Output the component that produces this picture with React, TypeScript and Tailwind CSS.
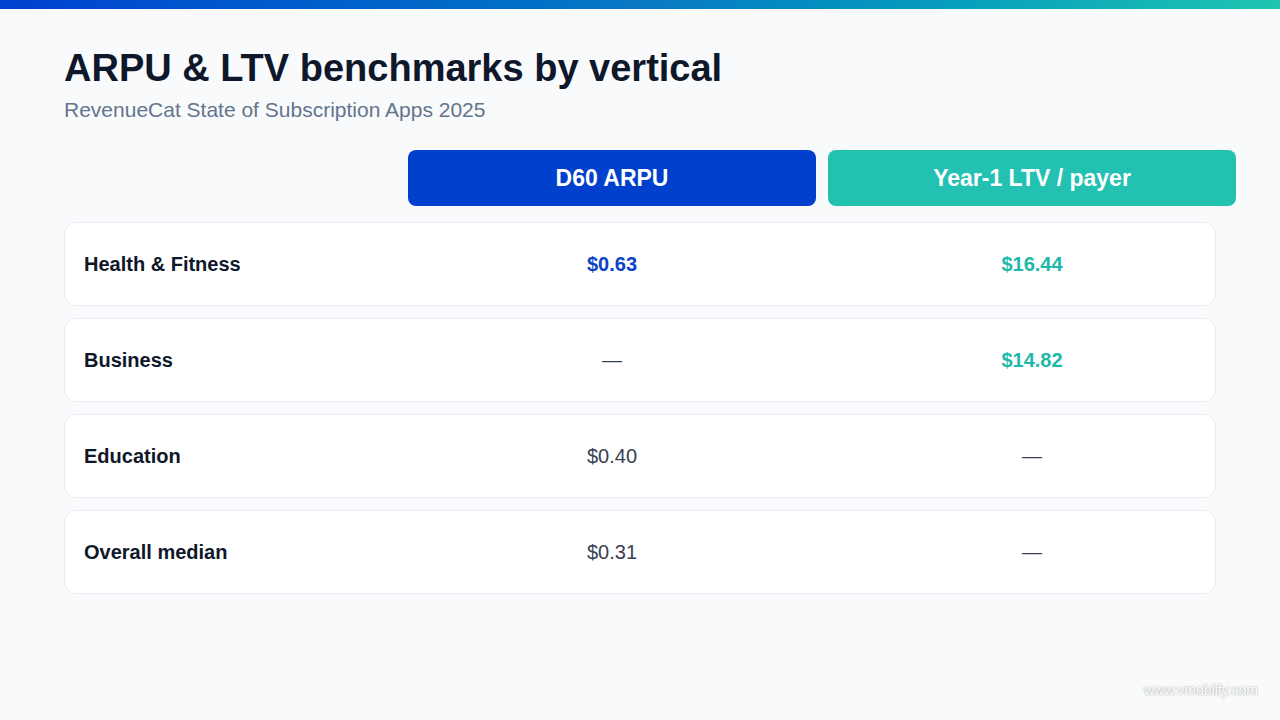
const rows = [
  { label: 'Health & Fitness', arpu: '$0.63', ltv: '$16.44' },
  { label: 'Business', arpu: null, ltv: '$14.82' },
  { label: 'Education', arpu: '$0.40', ltv: null },
  { label: 'Overall median', arpu: '$0.31', ltv: null },
];

export default function App() {
  return (
    <div
      className="w-[1280px] h-[720px] bg-[#f8fafc] relative overflow-hidden"
      style={{ fontFamily: '"Liberation Sans", Arial, sans-serif' }}
    >
      <div className="h-[9px] bg-gradient-to-r from-[#0040d0] via-[#0a78c4] to-[#20c4b0]" />

      <div className="px-16 pt-[36px]">
        <h1 className="text-[38px] leading-[46px] font-bold text-[#0f172a]">
          ARPU &amp; LTV benchmarks by vertical
        </h1>
        <div className="mt-[7px] text-[21px] leading-[24px] text-[#64748b]">
          RevenueCat State of Subscription Apps 2025
        </div>

        <div className="mt-[28px] grid grid-cols-[332px_408px_408px] gap-x-3">
          <div />
          <div className="h-[56px] rounded-lg bg-[#0040cc] flex items-center justify-center text-white text-[23px] font-bold">
            D60 ARPU
          </div>
          <div className="h-[56px] rounded-lg bg-[#22c1b2] flex items-center justify-center text-white text-[23px] font-bold">
            Year-1 LTV / payer
          </div>
        </div>

        <div className="mt-4 flex flex-col gap-3 w-[1152px]">
          {rows.map((r) => (
            <div
              key={r.label}
              className="h-[84px] bg-white border border-[#e8ebf0] rounded-xl pl-[19px] grid grid-cols-[312px_408px_408px] gap-x-3 items-center"
            >
              <div className="text-[20px] font-bold text-[#0f172a]">{r.label}</div>
              <div className="text-center text-[20px]">
                {r.arpu === null ? (
                  <span className="text-[#374151]">—</span>
                ) : r.label === 'Health & Fitness' ? (
                  <span className="font-bold text-[#0a44c4]">{r.arpu}</span>
                ) : (
                  <span className="text-[#374151]">{r.arpu}</span>
                )}
              </div>
              <div className="text-center text-[20px]">
                {r.ltv === null ? (
                  <span className="text-[#374151]">—</span>
                ) : (
                  <span className="font-bold text-[#20b8a8]">{r.ltv}</span>
                )}
              </div>
            </div>
          ))}
        </div>
      </div>

      <div
        className="absolute right-[22px] bottom-[19px] text-[14px] text-white"
        style={{ textShadow: '0 0 2px rgba(0,0,0,0.45)' }}
      >
        www.vmobiify.com
      </div>
    </div>
  );
}
